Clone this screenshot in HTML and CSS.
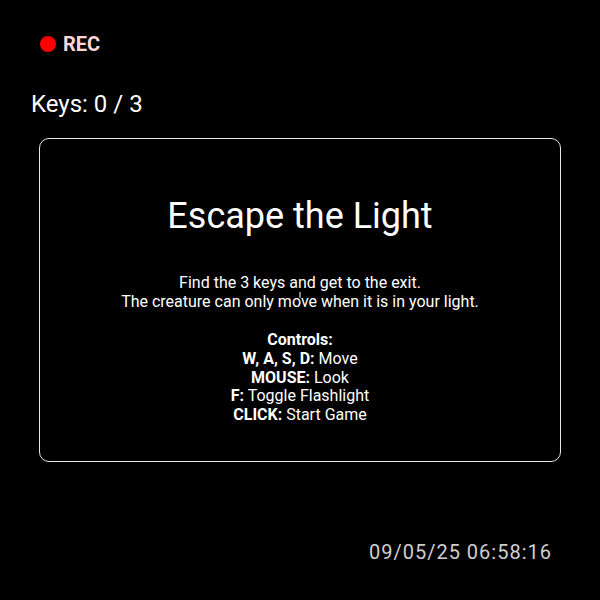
FILE: index.html
```html
<!DOCTYPE html>
<html>
<head>
<meta charset="utf-8">
<link rel="stylesheet" href="styles.css">
</head>
<body>
<div class="screen">
  <div class="rec"><span class="rec-dot"></span><span class="rec-text">REC</span></div>
  <div class="keys">Keys: 0 / 3</div>
  <div class="panel">
    <h1 class="title">Escape the Light</h1>
    <p class="info">Find the 3 keys and get to the exit.<br>The creature can only move when it is in your light.<br><br><b>Controls:</b><br><b>W, A, S, D:</b> Move<br><b>MOUSE:</b> Look<br><b>F:</b> Toggle Flashlight<br><b>CLICK:</b> Start Game</p>
  </div>
  <div class="crosshair"></div>
  <div class="stamp">09/05/25 06:58:16</div>
</div>
</body>
</html>
```
FILE: styles.css
```css
html, body {
  margin: 0;
  padding: 0;
  background: #000;
}
.screen {
  position: relative;
  width: 600px;
  height: 600px;
  display: flex;
  align-items: center;
  justify-content: center;
  font-family: Roboto, "Liberation Sans", sans-serif;
  color: #fff;
  overflow: hidden;
}
.rec {
  position: absolute;
  left: 40px;
  top: 33px;
  display: flex;
  align-items: center;
  gap: 7px;
}
.rec-dot {
  width: 16px;
  height: 16px;
  border-radius: 50%;
  background: #ff0000;
}
.rec-text {
  font-weight: bold;
  font-size: 20px;
  color: #ffd6d6;
  line-height: 22px;
}
.keys {
  position: absolute;
  left: 31px;
  top: 89px;
  font-size: 24px;
  line-height: 30px;
}
.panel {
  box-sizing: border-box;
  width: 522px;
  height: 324px;
  border: 1px solid #e6e6e6;
  border-radius: 10px;
  padding: 56px 20px 0;
  text-align: center;
}
.title {
  margin: 0 0 37px;
  font-size: 36px;
  font-weight: normal;
  line-height: 42px;
}
.info {
  margin: 0;
  font-size: 16px;
  line-height: 18.9px;
}
.info b {
  font-weight: bold;
}
.crosshair {
  position: absolute;
  left: 299px;
  top: 292px;
  width: 2px;
  height: 6px;
  background: rgba(255,255,255,0.5);
}
.stamp {
  position: absolute;
  right: 48px;
  top: 540px;
  font-size: 20px;
  line-height: 24px;
  color: #cfcfcf;
  letter-spacing: 1px;
}
```
